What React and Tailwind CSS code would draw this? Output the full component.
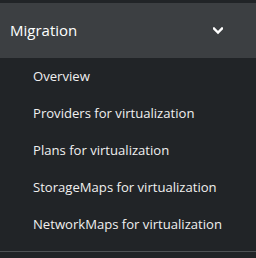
export default function App() {
  const items = [
    "Overview",
    "Providers for virtualization",
    "Plans for virtualization",
    "StorageMaps for virtualization",
    "NetworkMaps for virtualization",
  ];
  return (
    <div className="w-[256px] h-[258px] overflow-hidden bg-[#212427]" style={{ fontFamily: '"Open Sans", "Noto Sans", sans-serif' }}>
      <div className="h-[3px] bg-[#212427]" />
      <div className="h-[55px] bg-[#3c3f42] flex items-center justify-between pl-[10px] pr-[33px]">
        <span className="text-[15px] text-white">Migration</span>
        <svg width="10" height="8" viewBox="0 0 10 8" className="text-white">
          <path d="M1 1.5 L5 5.5 L9 1.5" stroke="currentColor" strokeWidth="2.4" fill="none" strokeLinecap="square" />
        </svg>
      </div>
      <div className="bg-[#212427] pb-[8px]">
        {items.map((t) => (
          <div key={t} className="h-[37px] flex items-center pl-[33px] text-[13.1px] text-[#f0f0f0]">
            {t}
          </div>
        ))}
      </div>
      <div className="h-px bg-[#4f5255]" />
    </div>
  );
}
